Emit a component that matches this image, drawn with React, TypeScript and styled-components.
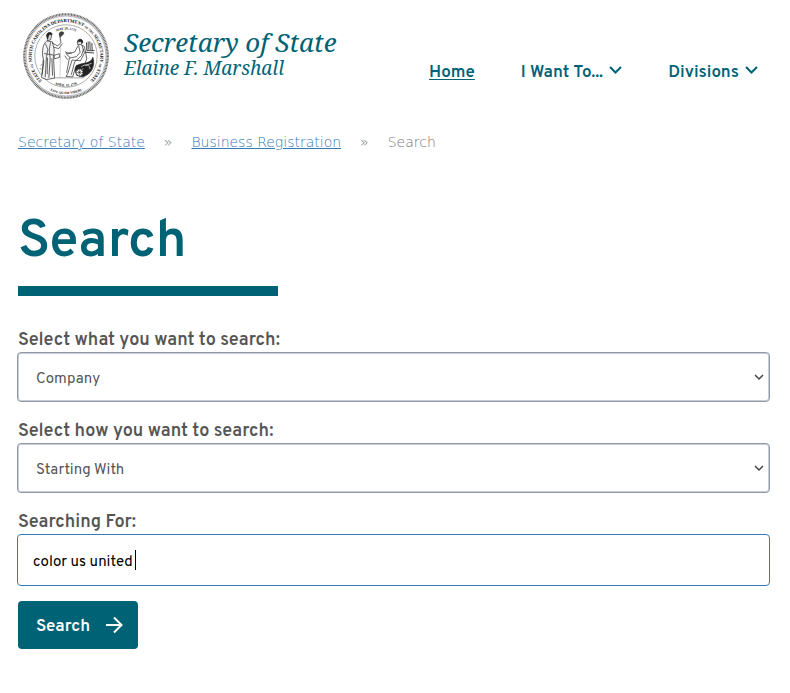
import React, { useState } from "react";
import styled, { createGlobalStyle } from "styled-components";

const teal = "#006275";
const sans = 'Overpass, "Noto Sans", sans-serif';

const GlobalStyle = createGlobalStyle`
  *, *::before, *::after { box-sizing: border-box; }
  body {
    margin: 0;
    background: #fff;
    color: #555;
    font-family: ${sans};
    font-size: 16px;
  }
`;

const Page = styled.div`
  padding: 12px 20px 40px 18px;
`;

const Header = styled.header`
  display: flex;
  align-items: flex-start;
  justify-content: space-between;
`;

const Brand = styled.a`
  display: flex;
  gap: 15px;
  padding-left: 5px;
  color: ${teal};
  text-decoration: none;
`;

const BrandText = styled.span`
  display: flex;
  flex-direction: column;
  padding-top: 15px;
  font-family: "Noto Serif", "Liberation Serif", serif;
  font-style: italic;
  white-space: nowrap;
`;

const BrandName = styled.span`
  font-size: 26px;
  line-height: 30px;
`;

const BrandPerson = styled.span`
  font-size: 19px;
  line-height: 22px;
`;

const Nav = styled.nav`
  display: flex;
  gap: 46px;
  padding: 50px 12px 0 0;
`;

const NavLink = styled.a<{ $current?: boolean }>`
  display: inline-flex;
  align-items: center;
  gap: 6px;
  color: ${teal};
  font-size: 17px;
  font-weight: 600;
  line-height: 22px;
  white-space: nowrap;
  text-decoration: ${(p) => (p.$current ? "underline" : "none")};
  text-decoration-thickness: 1px;
  text-underline-offset: 2px;

  svg { margin-bottom: 6px; }
`;

const Crumbs = styled.nav`
  display: flex;
  gap: 19px;
  margin-top: 32px;
  color: #777;
  font-family: "DejaVu Sans Light", "DejaVu Sans", sans-serif;
  font-size: 14px;
  font-weight: 200;
  line-height: 20px;
`;

const CrumbLink = styled.a`
  color: #337ab7;
  text-decoration: underline;
`;

const Title = styled.h1`
  margin: 55px 0 0;
  color: ${teal};
  font-size: 53px;
  font-weight: 600;
  line-height: 72px;
`;

const Rule = styled.div`
  width: 260px;
  height: 10px;
  margin: 7px 0 32px;
  background: ${teal};
`;

const Field = styled.div`
  margin: 0 0 17px -1px;

  &:last-of-type { margin-bottom: 15px; }
`;

const Label = styled.label`
  display: block;
  padding: 2px 0 0 1px;
  color: #555;
  font-size: 18px;
  font-weight: 600;
  line-height: 22px;
`;

const Control = styled.div`
  position: relative;
  color: #444;
`;

const Select = styled.select`
  appearance: none;
  display: block;
  width: 100%;
  height: 50px;
  padding: 4px 30px 0 18px;
  border: 1px solid #8f9ba8;
  border-radius: 4px;
  background: #fff;
  box-shadow: inset 0 0 0 1px #c8cdd2;
  color: #555;
  font: 400 15px ${sans};
`;

const SelectArrow = styled.svg`
  position: absolute;
  top: 22px;
  right: 6px;
  width: 10px;
  height: 7px;
  pointer-events: none;
`;

const Input = styled.input`
  display: block;
  width: 100%;
  height: 52px;
  padding: 4px 15px 0;
  border: 1px solid #337ab7;
  border-radius: 4px;
  outline: none;
  background: #fff;
  color: #000;
  caret-color: transparent;
  font: 400 15px ${sans};
`;

const Caret = styled.span`
  position: absolute;
  top: 16px;
  left: 118px;
  width: 1px;
  height: 20px;
  background: #000;
`;

const Submit = styled.button`
  display: inline-flex;
  align-items: center;
  gap: 15px;
  height: 48px;
  padding: 0 15px 0 18px;
  border: 0;
  border-radius: 4px;
  background: ${teal};
  color: #fff;
  font: 600 17px ${sans};
  cursor: pointer;

  span { padding-top: 4px; }
`;

const SealArt = styled.svg`
  flex: none;
  width: 86px;
  height: 88px;
`;

function Seal() {
  return (
    <SealArt viewBox="24 22 256 260" role="img" aria-label="Department seal">
      <defs>
        <path id="ringText" d="M 84 229 A 102 102 0 1 1 220 229" />
        <path id="mottoText" d="M 92 248 A 113 113 0 0 0 212 248" />
        <path id="dateTop" d="M 90 104 A 78 78 0 0 1 214 104" />
        <path id="dateBottom" d="M 98 224 A 89 89 0 0 0 206 224" />
      </defs>
      <circle cx="152" cy="152" r="124" fill="#fff" stroke="#666" strokeWidth="7" strokeDasharray="3 1.5" />
      <circle cx="152" cy="152" r="119" fill="none" stroke="#777" strokeWidth="1.5" />
      <circle cx="152" cy="152" r="93" fill="none" stroke="#888" strokeWidth="2" />
      <g fill="#111" fontFamily="Liberation Serif, serif" fontWeight="700" textAnchor="middle">
        <text fontSize="14"><textPath href="#ringText" startOffset="50%">STATE <tspan fontSize="9">OF</tspan> NORTH CAROLINA DEPARTMENT <tspan fontSize="9">OF THE</tspan> SECRETARY <tspan fontSize="9">OF</tspan> STATE</textPath></text>
        <text fontSize="10"><textPath href="#mottoText" startOffset="50%">ESSE QUAM VIDERI</textPath></text>
        <text fontSize="10"><textPath href="#dateTop" startOffset="50%">MAY 20, 1775</textPath></text>
        <text fontSize="10"><textPath href="#dateBottom" startOffset="50%">APRIL 12, 1776</textPath></text>
      </g>
      <g stroke="#222" strokeWidth="2" fill="none" strokeLinecap="round" strokeLinejoin="round">
        <path d="M94 108 C83 116 82 132 82 148 L86 170 L79 216 L94 222 L118 218 L115 160 L117 134 L112 111 Z" fill="#f3f3f3" />
        <path d="M96 91 C97 82 109 83 109 92 L106 104 L98 106 Z" fill="#ddd" />
        <path d="M94 91 C96 78 110 80 111 88 L101 89 L98 100 Z" fill="#222" />
        <path d="M91 116 L98 132 L94 154 L90 214 M106 112 L102 134 L105 158 L101 216 M88 145 L114 149 M84 165 L81 206 M110 160 L112 209 M97 158 L96 205" />
        <path d="M112 114 L127 122 L137 112 L133 88 M117 126 L130 130 L141 116" />
        <path d="M134 91 L136 132 L134 214" strokeWidth="1" stroke="#777" />
        <path d="M132 87 C130 79 147 77 145 86 L136 95 Z" fill="#444" />
        <path d="M117 150 L132 145 L133 156 L119 160 Z" fill="#fff" />
        <path d="M186 110 C186 100 198 99 201 108 L197 118 L188 118 Z" fill="#ddd" />
        <path d="M187 109 C190 98 205 102 201 114 L196 109 Z" fill="#222" />
        <path d="M188 121 L178 140 L156 146 L151 139 M199 120 L207 143 L195 166 L170 164 L157 205 L152 213 L172 214 L181 184 L203 188 L214 160 L207 125 Z" fill="#fbfbfb" />
        <path d="M190 122 L194 141 L183 154 L162 158 L154 201 M204 132 L198 151 L178 169 L168 207" />
        <path d="M152 143 L168 143 M154 148 L164 156 M149 152 L156 162" />
        <path d="M213 113 L214 136 L236 136 M218 110 L218 132 M223 110 L224 133 M229 114 L230 136 M211 141 L234 143" strokeWidth="2.5" />
        <path d="M184 180 C203 171 225 177 232 156 C240 181 228 207 202 214 C181 213 174 190 184 180 Z" fill="#222" />
        <path d="M198 184 C211 172 226 181 223 190 M202 190 L197 205 M211 180 L227 174" stroke="#fff" />
        <circle cx="192" cy="201" r="11" fill="#fff" stroke="#222" strokeWidth="2.5" />
        <path d="M181 201 H203 M192 190 V212 M184 193 L200 209 M200 193 L184 209" strokeWidth="1.5" />
        <path d="M76 181 L82 175 M74 189 L82 192 M118 217 H206" stroke="#777" />
      </g>
    </SealArt>
  );
}

function Chevron() {
  return (
    <svg width="13" height="8" viewBox="0 0 13 8" fill="none" stroke="currentColor" strokeWidth="2" aria-hidden="true">
      <path d="M1 1 L6.5 6.5 L12 1" />
    </svg>
  );
}

function SelectField({ id, label, options }: { id: string; label: string; options: string[] }) {
  return (
    <Field>
      <Label htmlFor={id}>{label}</Label>
      <Control>
        <Select id={id}>
          {options.map((option) => (
            <option key={option}>{option}</option>
          ))}
        </Select>
        <SelectArrow viewBox="0 0 10 7" fill="none" stroke="currentColor" strokeWidth="1.5" aria-hidden="true">
          <path d="M1 1 L5 5 L9 1" />
        </SelectArrow>
      </Control>
    </Field>
  );
}

export default function App() {
  const [query, setQuery] = useState("color us united");
  return (
    <>
      <GlobalStyle />
      <Page>
        <Header>
          <Brand href="#">
            <Seal />
            <BrandText>
              <BrandName>Secretary of State</BrandName>
              <BrandPerson>Elaine F. Marshall</BrandPerson>
            </BrandText>
          </Brand>
          <Nav aria-label="Main">
            <NavLink href="#" $current aria-current="page">Home</NavLink>
            <NavLink href="#want">I Want To... <Chevron /></NavLink>
            <NavLink href="#divisions">Divisions <Chevron /></NavLink>
          </Nav>
        </Header>
        <Crumbs aria-label="Breadcrumb">
          <CrumbLink href="#">Secretary of State</CrumbLink>
          <span>»</span>
          <CrumbLink href="#registration">Business Registration</CrumbLink>
          <span>»</span>
          <span>Search</span>
        </Crumbs>
        <main>
          <Title>Search</Title>
          <Rule />
          <form onSubmit={(e) => e.preventDefault()}>
            <SelectField id="what" label="Select what you want to search:" options={["Company"]} />
            <SelectField id="how" label="Select how you want to search:" options={["Starting With"]} />
            <Field>
              <Label htmlFor="query">Searching For:</Label>
              <Control>
                <Input id="query" type="text" value={query} onChange={(e) => setQuery(e.target.value)} />
                <Caret />
              </Control>
            </Field>
            <Submit type="submit">
              <span>Search</span>
              <svg width="18" height="18" viewBox="0 0 18 18" fill="none" stroke="currentColor" strokeWidth="2" aria-hidden="true">
                <path d="M1 9 H16 M9 1.5 L16.5 9 L9 16.5" />
              </svg>
            </Submit>
          </form>
        </main>
      </Page>
    </>
  );
}
